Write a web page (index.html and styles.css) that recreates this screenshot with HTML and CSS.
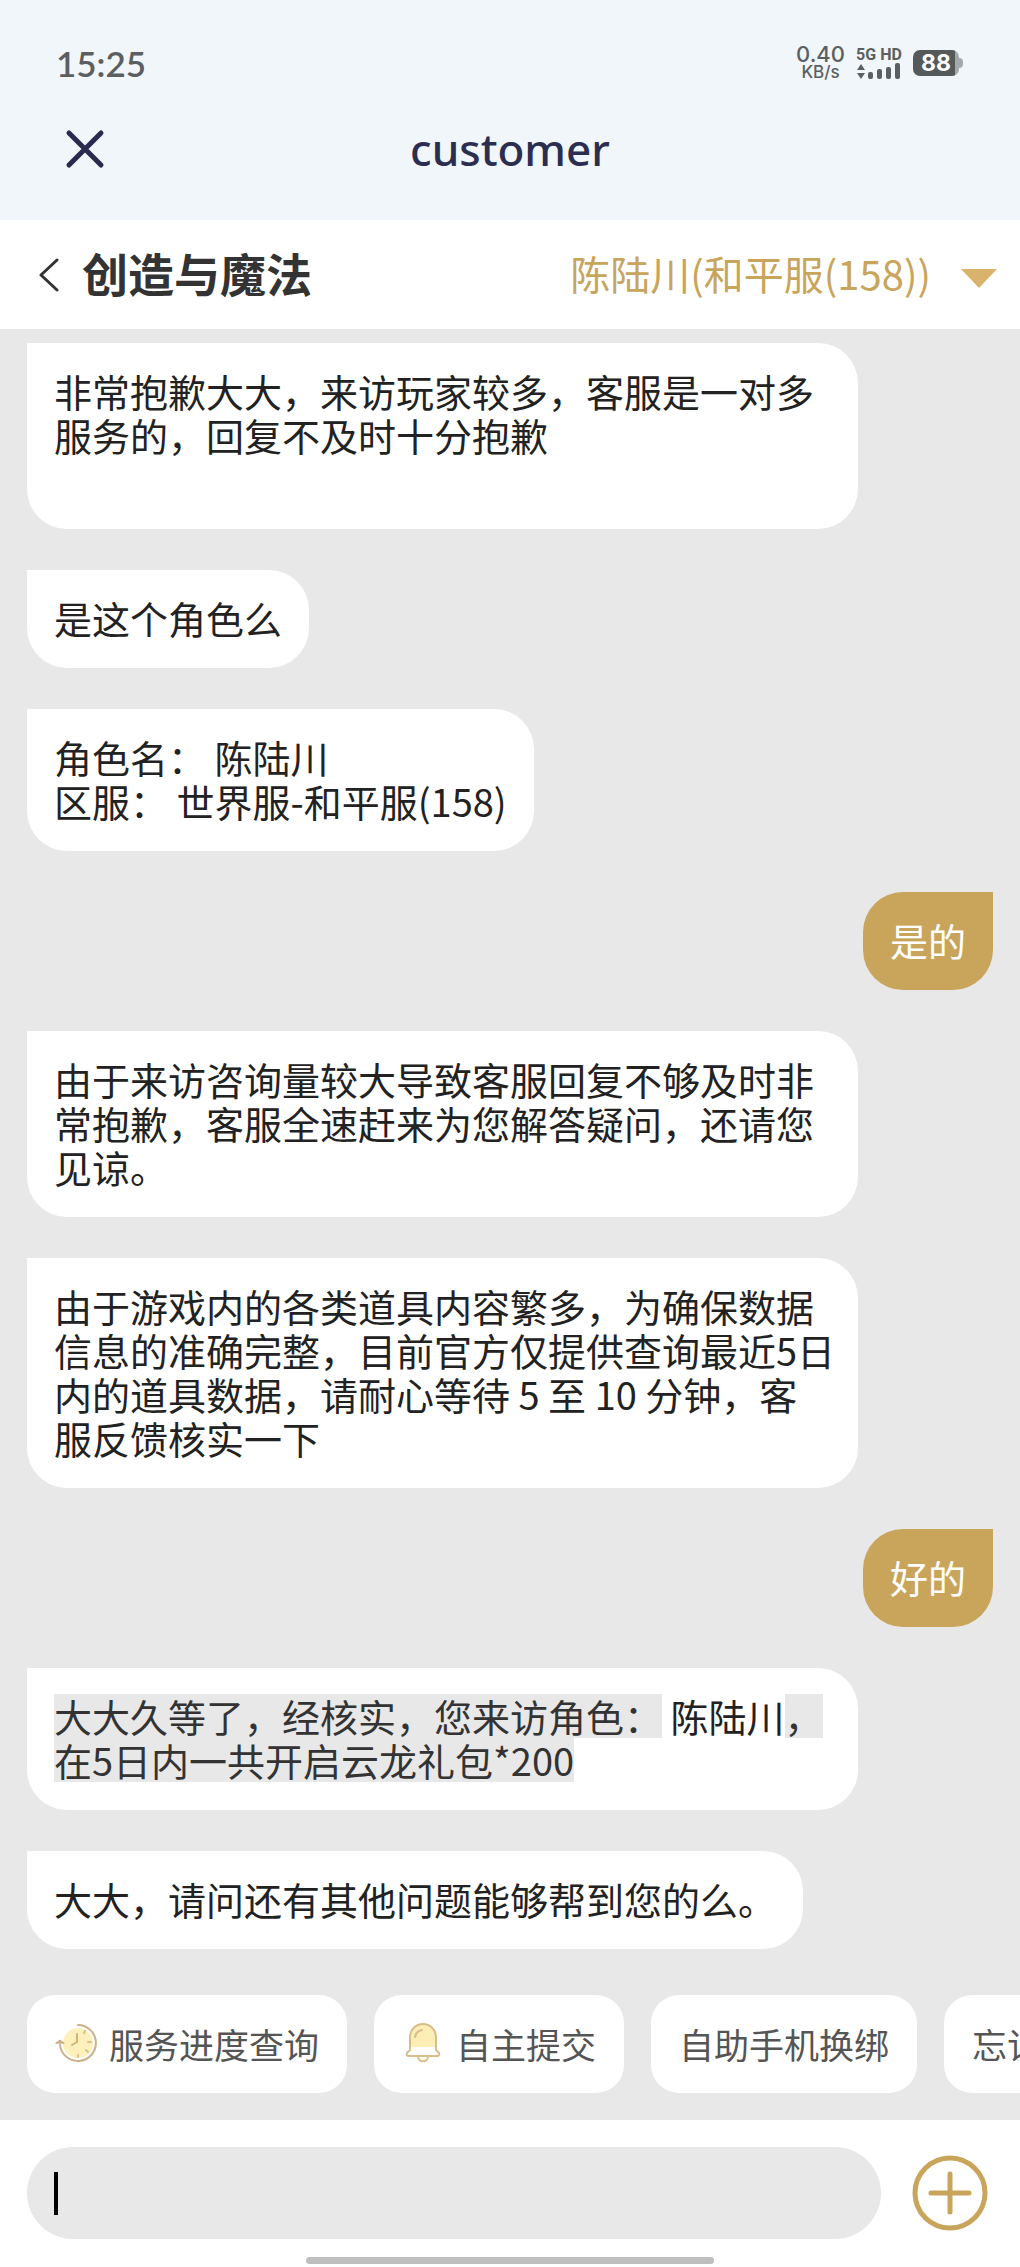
FILE: index.html
```html
<!DOCTYPE html>
<html lang="zh-CN">
<head>
  <meta charset="UTF-8">
  <meta name="viewport" content="width=device-width, initial-scale=1.0">
  <title>customer</title>
  <link rel="stylesheet" href="styles.css">
</head>
<body>
  <header class="top">
    <div class="status">
      <span class="time">15:25</span>
      <div class="status-right">
        <div class="speed">
          <span class="speed-value">0.40</span>
          <span class="speed-unit">KB/s</span>
        </div>
        <div class="network">
          <span class="network-type">5G HD</span>
          <svg width="46" height="17" viewBox="0 0 46 17" fill="#5b5f61">
            <path d="M5 1l4 6H1zM5 16l4-6H1z"/>
            <rect x="12" y="9" width="5" height="7" rx="2"/>
            <rect x="21" y="6" width="5" height="10" rx="2"/>
            <rect x="30" y="4" width="5" height="12" rx="2"/>
            <rect x="39" y="0" width="5" height="16" rx="2"/>
          </svg>
        </div>
        <div class="battery">88</div>
      </div>
    </div>
    <div class="title-row">
      <button class="icon-btn close" aria-label="关闭">
        <svg width="40" height="40" viewBox="0 0 40 40" fill="none" stroke="#2b2a4e" stroke-width="5" stroke-linecap="round">
          <path d="M4 4l32 32M36 4L4 36"/>
        </svg>
      </button>
      <h1>customer</h1>
    </div>
  </header>

  <nav class="game-bar">
    <button class="icon-btn back" aria-label="返回">
      <svg width="20" height="34" viewBox="0 0 20 34" fill="none" stroke="#333" stroke-width="3" stroke-linecap="round" stroke-linejoin="round">
        <path d="M18 2L2 17l16 15"/>
      </svg>
    </button>
    <h2>创造与魔法</h2>
    <button class="role">
      陈陆川(和平服(158))
      <svg class="arrow" width="36" height="19" viewBox="0 0 36 19" fill="#d9b36c">
        <path d="M0 0h36L18 19z"/>
      </svg>
    </button>
  </nav>

  <main class="chat">
    <div class="bubble wide">非常抱歉大大，来访玩家较多，客服是一对多服务的，回复不及时十分抱歉<br><br></div>
    <div class="bubble">是这个角色么</div>
    <div class="bubble">角色名： 陈陆川<br>区服： 世界服-和平服(158)</div>
    <div class="bubble mine">是的</div>
    <div class="bubble wide">由于来访咨询量较大导致客服回复不够及时非常抱歉，客服全速赶来为您解答疑问，还请您见谅。</div>
    <div class="bubble wide">由于游戏内的各类道具内容繁多，为确保数据信息的准确完整，目前官方仅提供查询最近5日内的道具数据，请耐心等待 5 至 10 分钟，客<br>服反馈核实一下</div>
    <div class="bubble mine">好的</div>
    <div class="bubble wide"><span class="shade">大大久等了，经核实，您来访角色：</span> 陈陆川<span class="shade">，在5日内一共开启云龙礼包*200</span></div>
    <div class="bubble">大大，请问还有其他问题能够帮到您的么。</div>
  </main>

  <div class="shortcuts">
    <button class="chip">
      <svg width="42" height="42" viewBox="0 0 42 42" fill="none" stroke-linecap="round" stroke-linejoin="round">
        <circle cx="23" cy="21" r="15" fill="#fdf0bd"/>
        <path d="M23 3a18 18 0 1 1-18 20" stroke="#ccb08c" stroke-width="2"/>
        <path d="M1 21l4-3 4 3z" fill="#ccae85" stroke="#ccae85"/>
        <path d="M22 12v8l-5 3" stroke="#d3b56f" stroke-width="2"/>
        <path d="M29 11l1-2M33 20h3M31 28l2 2M23 33v2" stroke="#dcc185" stroke-width="2"/>
      </svg>
      服务进度查询
    </button>
    <button class="chip">
      <svg width="42" height="42" viewBox="0 0 42 42" fill="none" stroke="#d9bd8a" stroke-width="2" stroke-linecap="round" stroke-linejoin="round">
        <path d="M8 25V15a13 13 0 0 1 26 0v10z" fill="#fdeeb5" stroke="none"/>
        <path d="M8 28V15a13 13 0 0 1 26 0v13l3 3q1 3-2 3H7q-3 0-2-3z"/>
        <path d="M13 15q1-6 7-7M16 34c0 7 10 7 10 0"/>
      </svg>
      自主提交
    </button>
    <button class="chip">自助手机换绑</button>
    <button class="chip">忘记密码</button>
  </div>

  <footer class="footer">
    <div class="composer">
      <div class="field">
        <input type="text" aria-label="输入消息">
        <span class="caret"></span>
      </div>
      <button class="icon-btn" aria-label="更多">
        <svg width="76" height="76" viewBox="0 0 76 76" fill="none" stroke="#c9a55c" stroke-width="5" stroke-linecap="round">
          <circle cx="38" cy="38" r="35"/>
          <path d="M38 19v38M19 38h38"/>
        </svg>
      </button>
    </div>
    <div class="home-bar"></div>
  </footer>
</body>
</html>
```
FILE: styles.css
```css
* {
  box-sizing: border-box;
}
body {
  margin: 0;
  min-height: 100vh;
  display: flex;
  flex-direction: column;
  background-color: #e8e8e8;
  font-family: "Noto Sans CJK SC", sans-serif;
  color: #222;
  overflow-x: hidden;
}
button {
  font-family: inherit;
  border: none;
  background: none;
  padding: 0;
  cursor: pointer;
}
svg {
  display: block;
  flex-shrink: 0;
}
.icon-btn {
  display: flex;
}

/* status bar and page title */
.top {
  background-color: #f1f6fa;
  padding: 40px 0 22px;
}
.status {
  display: flex;
  justify-content: space-between;
  align-items: center;
  height: 46px;
  padding: 0 56px;
  color: #5b5f61;
  font-family: Lato, sans-serif;
}
.time {
  font-size: 35px;
  font-weight: 600;
}
.status-right {
  display: flex;
  align-items: center;
  gap: 11px;
  font-weight: 700;
}
.speed,
.network {
  display: flex;
  flex-direction: column;
  align-items: center;
}
.speed {
  font-family: Inter, sans-serif;
  font-weight: 500;
}
.speed-value {
  font-size: 22px;
  line-height: 19px;
}
.speed-unit {
  font-size: 17px;
  line-height: 17px;
}
.network-type {
  font-family: Roboto, sans-serif;
  font-size: 16px;
  line-height: 16px;
}
.battery {
  position: relative;
  width: 46px;
  height: 26px;
  margin-right: 5px;
  border-radius: 7px;
  background: linear-gradient(to right, #55595a 42px, #a5a9ab 42px);
  color: #fff;
  font-family: Inter, sans-serif;
  font-size: 23px;
  line-height: 26px;
  text-align: center;
}
.battery::after {
  content: "";
  position: absolute;
  left: 46px;
  top: 8px;
  width: 4px;
  height: 10px;
  border-radius: 0 4px 4px 0;
  background-color: #a5a9ab;
}
.title-row {
  display: grid;
  grid-template-columns: 1fr auto 1fr;
  align-items: center;
  height: 98px;
  margin-top: 14px;
  padding: 0 65px;
}
.close {
  justify-self: start;
}
h1 {
  margin: 0;
  color: #2b2e4e;
  font-family: "Noto Sans", sans-serif;
  font-size: 44px;
  font-weight: 500;
}

/* game and role */
.game-bar {
  display: flex;
  align-items: center;
  height: 109px;
  padding: 0 23px 0 39px;
  background-color: #fff;
}
h2 {
  margin: 0 auto 0 23px;
  padding-bottom: 6px;
  color: #333;
  font-size: 46px;
  line-height: 60px;
}
.role {
  display: flex;
  align-items: center;
  gap: 30px;
  padding-bottom: 4px;
  color: #c9a55c;
  font-size: 40px;
  line-height: 60px;
}
.arrow {
  margin-top: 12px;
}

/* messages */
.chat {
  display: flex;
  flex-direction: column;
  align-items: flex-start;
  gap: 41px;
  padding: 14px 27px 46px;
}
.bubble {
  max-width: 86%;
  padding: 26px 27px 28px;
  border-radius: 0 40px 40px 40px;
  background-color: #fff;
  font-size: 38px;
  line-height: 44px;
}
.wide {
  padding-right: 20px;
}
.mine {
  align-self: flex-end;
  border-radius: 40px 0 40px 40px;
  background-color: #c9a55c;
  color: #fff;
}
/* one line high, so that it does not cover the line above */
.shade {
  background: linear-gradient(#e8e8e8, #e8e8e8) center / 100% 44px no-repeat;
  color: #333;
}

/* quick actions */
.shortcuts {
  display: flex;
  gap: 27px;
  margin-top: auto;
  padding: 0 27px 27px;
  overflow: hidden;
}
.chip {
  display: flex;
  flex-shrink: 0;
  align-items: center;
  gap: 12px;
  height: 98px;
  padding: 0 28px 2px;
  border-radius: 28px;
  background-color: #fff;
  color: #555;
  font-size: 35px;
}

/* input row */
.footer {
  padding: 27px 0 3px;
  background-color: #fff;
}
.composer {
  display: flex;
  align-items: center;
  gap: 31px;
  padding: 0 32px 0 27px;
}
.field {
  position: relative;
  flex: 1;
}
.field input {
  display: block;
  width: 100%;
  height: 92px;
  padding: 0 27px;
  border: none;
  border-radius: 46px;
  outline: none;
  background-color: #e8e8e8;
  font-family: inherit;
  font-size: 38px;
}
.caret {
  position: absolute;
  left: 27px;
  top: 25px;
  width: 4px;
  height: 43px;
  background-color: #000;
}
.home-bar {
  width: 40%;
  height: 7px;
  margin: 18px auto 0;
  border-radius: 4px;
  background-color: #bfbfbf;
}
```
